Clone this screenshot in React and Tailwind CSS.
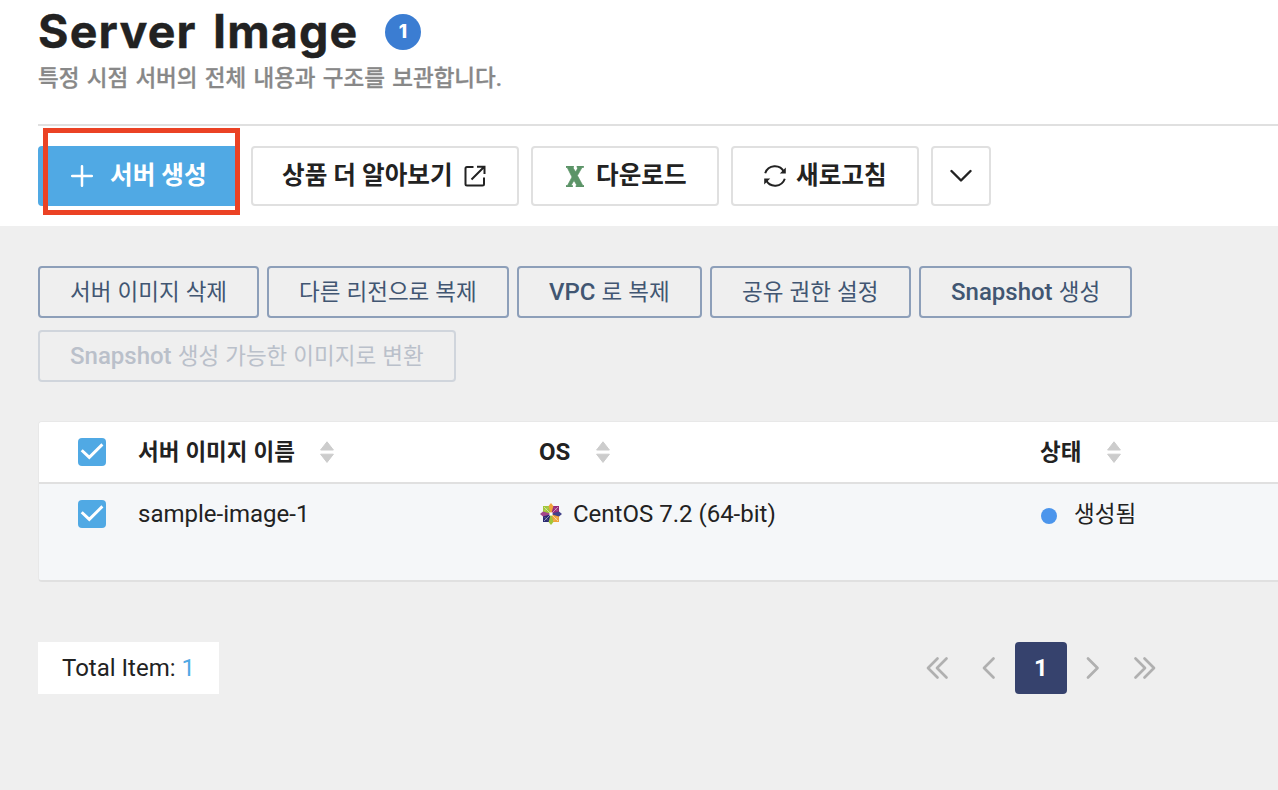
import React from "react";

const SANS = "font-[Roboto,'Noto_Sans_CJK_KR',sans-serif]";

function Ko({ children, className = "" }) {
  return <span className={"whitespace-pre text-[22.5px] " + className}>{children}</span>;
}

function Label({ children, className = "" }) {
  return <span className={"whitespace-pre text-[24.6px] leading-9 " + className}>{children}</span>;
}

function ToolButton({ className = "", children }) {
  return (
    <button className={"flex h-[60px] shrink-0 items-center rounded-[4px] border-2 border-[#e0e0e0] bg-white font-bold text-[#222] " + className}>
      {children}
    </button>
  );
}

function ActionButton({ className = "", children }) {
  return (
    <button className={"flex h-[52px] shrink-0 items-center rounded-[4px] border-2 pl-[30px] text-[24px] leading-none whitespace-pre [word-spacing:0.5px] " + className}>
      {children}
    </button>
  );
}

function Check() {
  return (
    <span className="flex size-7 shrink-0 items-center justify-center rounded-[4px] bg-[#50a9e4]">
      <svg width="28" height="28" viewBox="0 0 28 28" fill="none" stroke="#fff" strokeWidth="2.9">
        <path d="M3.7 12.2L11.3 19.4L24.4 6.4" />
      </svg>
    </span>
  );
}

function Sort({ className = "" }) {
  return (
    <svg className={className} width="16" height="24" viewBox="0 0 16 24" fill="#ccc" stroke="#ccc" strokeWidth="1" strokeLinejoin="round">
      <path d="M8 1.8L14.4 10H1.6Z" />
      <path d="M8 22.4L14.4 14.2H1.6Z" />
    </svg>
  );
}

function CentOS() {
  return (
    <svg width="22" height="22" viewBox="0 0 22 22">
      <path d="M3 3H10.6V10.6H3Z" fill="#a1c63b" />
      <path d="M11.4 3H19V10.6H11.4Z" fill="#952b7b" />
      <path d="M3 11.4H10.6V19H3Z" fill="#2a2a72" />
      <path d="M11.4 11.4H19V19H11.4Z" fill="#efa33b" />
      <path d="M11 0L13.4 3L11.6 10H10.4L8.6 3Z" fill="#efa33b" />
      <path d="M22 11L19 13.4L12 11.6V10.4L19 8.6Z" fill="#43438a" />
      <path d="M11 22L8.6 19L10.4 12H11.6L13.4 19Z" fill="#a1c63b" />
      <path d="M0 11L3 8.6L10 10.4V11.6L3 13.4Z" fill="#a3468b" />
      <path d="M4 4L18 18M18 4L4 18" stroke="#fff" strokeOpacity=".55" strokeWidth=".9" />
      <path d="M4.5 8L8 4.5M14 4.5L17.5 8M4.5 14L8 17.5M14 17.5L17.5 14" stroke="#fff" strokeOpacity=".4" strokeWidth=".7" />
      <circle cx="11" cy="11" r="1.7" fill="#fff" />
    </svg>
  );
}

function Chevrons({ d, w = 24 }) {
  return (
    <svg width={w} height="24" viewBox={"0 0 " + w + " 24"} fill="none" stroke="#b0b0b0" strokeWidth="2.7" strokeLinecap="round" strokeLinejoin="round">
      <path d={d} />
    </svg>
  );
}

const ACTIVE = "border-[#8d9fb9] font-medium text-[#415672] ";

export default function App() {
  return (
    <div className={"h-[790px] w-[1278px] overflow-hidden bg-[#efefef] text-[#222] " + SANS}>
      <header className="h-[226px] bg-white pl-[38px]">
        <div className="flex h-16 items-center">
          <h1 className="w-[347px] pb-0.5 whitespace-nowrap font-[Inter,sans-serif] text-[46.5px] leading-[62px] font-bold tracking-[1.2px] [word-spacing:4px] [-webkit-text-stroke:0.4px_#222]">Server Image</h1>
          <span className="flex size-9 items-center justify-center rounded-full bg-[#3b7dd2] font-[Inter,sans-serif] text-[19px] font-extrabold text-white">1</span>
        </div>
        <p className="h-[60px] pt-px leading-[26px] font-medium text-[#888]"><Ko className="[word-spacing:1.7px] [-webkit-text-stroke:0.3px_#888]">특정 시점 서버의 전체 내용과 구조를 보관합니다.</Ko></p>
        <div className="h-0.5 bg-[#e0e0e0]" />
        <div className="flex gap-3 pt-5">
          <div className="relative">
            <button className="flex h-[60px] w-[201px] items-center rounded-[4px] bg-[#50a9e4] pl-[33px] font-bold text-white">
              <svg width="22" height="22" viewBox="0 0 22 22" stroke="#fff" strokeWidth="2.5" strokeLinecap="round"><path d="M11 1.2V20.8M1.2 11H20.8" /></svg>
              <Label className="ml-[17px]">서버 생성</Label>
            </button>
            <div className="absolute -top-[18px] left-[5px] h-[87px] w-[197px] border-[5px] border-[#eb4224]" />
          </div>
          <ToolButton className="w-[268px] pl-[29px]">
            <Label>상품 더 알아보기</Label>
            <svg className="ml-[11px]" width="22" height="22" viewBox="0 0 22 22" fill="none" stroke="#222" strokeWidth="2">
              <path d="M9.5 2H3Q1.5 2 1.5 3.5V19Q1.5 20.5 3 20.5H18.5Q20 20.5 20 19V12.5M7.5 14.5L20 2M13 1.7H20.5V9" />
            </svg>
          </ToolButton>
          <ToolButton className="w-[188px] pl-[33px]">
            <svg width="18" height="21" viewBox="0 0 18 21" fill="#5b9467">
              <path d="M0 0H7.5V1.5H6.8L9.8 6L12 1.5H11V0H17.5V1.5H16L11.4 9.6L16.8 19.5H18V21H10V19.5H11L8 14.5L5 19.5H6.5V21H0V19.5H1.5L6 11L1.2 1.5H0Z" stroke="#5b9467" strokeWidth=".7" />
            </svg>
            <Label className="ml-3">다운로드</Label>
          </ToolButton>
          <ToolButton className="w-[188px] pl-[30px]">
            <svg width="24" height="24" viewBox="0 0 24 24" fill="none" stroke="#222" strokeWidth="2">
              <path d="M2.2 9.2A10.2 10.2 0 0 1 21 8" />
              <path d="M21.8 14.8A10.2 10.2 0 0 1 3 16" />
              <path d="M22.8 3.5V9.5H16.8ZM1.2 20.5V14.5H7.2Z" fill="#222" stroke="none" />
            </svg>
            <Label className="ml-[9px]">새로고침</Label>
          </ToolButton>
          <ToolButton className="w-[60px] justify-center">
            <svg width="22" height="14" viewBox="0 0 22 14" fill="none" stroke="#222" strokeWidth="2.4" strokeLinecap="round" strokeLinejoin="round"><path d="M1.5 2L11 11.5L20.5 2" /></svg>
          </ToolButton>
        </div>
      </header>

      <main className="pt-10 pl-[38px]">
        <div className="flex gap-2">
          <ActionButton className={ACTIVE + "w-[221px]"}><Ko className="font-normal">서버 이미지 삭제</Ko></ActionButton>
          <ActionButton className={ACTIVE + "w-[242px]"}><Ko className="font-normal">다른 리전으로 복제</Ko></ActionButton>
          <ActionButton className={ACTIVE + "w-[185px]"}>VPC<Ko className="font-normal"> 로 복제</Ko></ActionButton>
          <ActionButton className={ACTIVE + "w-[201px]"}><Ko className="font-normal">공유 권한 설정</Ko></ActionButton>
          <ActionButton className={ACTIVE + "w-[213px]"}>Snapshot<Ko className="font-normal"> 생성</Ko></ActionButton>
        </div>
        <ActionButton className="mt-3 w-[418px] border-[#d0d5dc] font-medium text-[#bac0ca]">Snapshot<Ko className="font-normal"> 생성 가능한 이미지로 변환</Ko></ActionButton>

        <section className="mt-[39px] h-[161px] rounded-l-[4px] border border-r-0 border-b-2 border-[#e0e0e0] border-t-[#e8e8e8] border-l-[#e8e8e8] bg-[#f5f7f9]">
          <div className="flex h-[62px] items-center rounded-tl-[3px] border-b-2 border-[#e0e0e0] bg-white pl-[39px] font-bold">
            <Check />
            <div className="ml-8 flex w-[401px] items-center"><Ko className="pt-px [word-spacing:0.4px]">서버 이미지 이름</Ko><Sort className="ml-6" /></div>
            <div className="flex w-[501px] items-center text-[24px]"><span>OS</span><Sort className="ml-[25px]" /></div>
            <div className="flex items-center"><Ko className="pt-px">상태</Ko><Sort className="ml-[25px]" /></div>
          </div>
          <div className="flex h-[60px] items-center pl-[39px] text-[24px]">
            <Check />
            <div className="ml-8 w-[402px]"><span>sample-image-1</span></div>
            <div className="flex w-[501px] items-center"><CentOS /><span className="ml-[11px]">CentOS 7.2 (64-bit)</span></div>
            <div className="flex items-center"><span className="mt-1 mr-[17px] size-4 rounded-full bg-[#4b95ec]" /><Ko className="pt-px">생성됨</Ko></div>
          </div>
        </section>

        <footer className="mt-[60px] flex h-[52px] items-center">
          <div className="flex h-[52px] w-[181px] items-center bg-white pl-6 text-[24px] whitespace-pre"><span>Total Item: <span className="text-[#50a9e4]">1</span></span></div>
          <nav className="ml-[706px] flex items-center">
            <Chevrons d="M12.5 2.5L3 12L12.5 21.5M21.5 2.5L12 12L21.5 21.5" />
            <span className="ml-8 flex"><Chevrons w={16} d="M12.5 2.5L3 12L12.5 21.5" /></span>
            <span className="ml-[18px] flex size-[52px] items-center justify-center rounded-[4px] bg-[#36426d] text-[24px] font-bold text-white">1</span>
            <span className="ml-[18px] flex"><Chevrons w={16} d="M3 2.5L12.5 12L3 21.5" /></span>
            <span className="ml-8 flex"><Chevrons d="M2.5 2.5L12 12L2.5 21.5M11.5 2.5L21 12L11.5 21.5" /></span>
          </nav>
        </footer>
      </main>
    </div>
  );
}
